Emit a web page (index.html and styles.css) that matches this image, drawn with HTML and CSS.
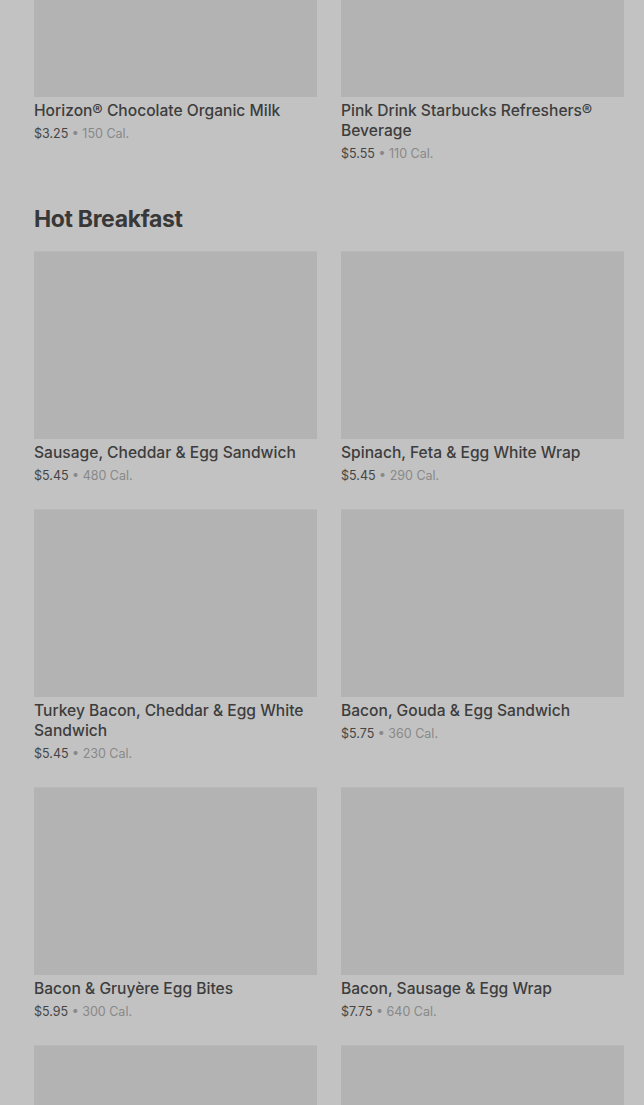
FILE: index.html
```html
<!DOCTYPE html>
<html lang="en">

<head>
    <meta charset="UTF-8">
    <meta name="viewport" content="width=device-width, initial-scale=1.0">
    <title>Menu - Hot Breakfast</title>
    <link rel="stylesheet" href="styles.css">
</head>

<body>
    <div class="page">
        <section class="menu-section first">
            <div class="item-grid">
                <div class="item-card">
                    <div class="item-image"></div>
                    <h3 class="item-title">Horizon® Chocolate Organic Milk</h3>
                    <p class="item-meta"><span class="price">$3.25</span> • 150 Cal.</p>
                </div>
                <div class="item-card">
                    <div class="item-image"></div>
                    <h3 class="item-title">Pink Drink Starbucks Refreshers® Beverage</h3>
                    <p class="item-meta"><span class="price">$5.55</span> • 110 Cal.</p>
                </div>
            </div>
        </section>

        <section class="menu-section">
            <h2 class="section-title">Hot Breakfast</h2>
            <div class="item-grid">
                <div class="item-card">
                    <div class="item-image"></div>
                    <h3 class="item-title">Sausage, Cheddar &amp; Egg Sandwich</h3>
                    <p class="item-meta"><span class="price">$5.45</span> • 480 Cal.</p>
                </div>
                <div class="item-card">
                    <div class="item-image"></div>
                    <h3 class="item-title">Spinach, Feta &amp; Egg White Wrap</h3>
                    <p class="item-meta"><span class="price">$5.45</span> • 290 Cal.</p>
                </div>
                <div class="item-card">
                    <div class="item-image"></div>
                    <h3 class="item-title">Turkey Bacon, Cheddar &amp; Egg White Sandwich</h3>
                    <p class="item-meta"><span class="price">$5.45</span> • 230 Cal.</p>
                </div>
                <div class="item-card">
                    <div class="item-image"></div>
                    <h3 class="item-title">Bacon, Gouda &amp; Egg Sandwich</h3>
                    <p class="item-meta"><span class="price">$5.75</span> • 360 Cal.</p>
                </div>
                <div class="item-card">
                    <div class="item-image"></div>
                    <h3 class="item-title">Bacon &amp; Gruyère Egg Bites</h3>
                    <p class="item-meta"><span class="price">$5.95</span> • 300 Cal.</p>
                </div>
                <div class="item-card">
                    <div class="item-image"></div>
                    <h3 class="item-title">Bacon, Sausage &amp; Egg Wrap</h3>
                    <p class="item-meta"><span class="price">$7.75</span> • 640 Cal.</p>
                </div>
                <div class="item-card">
                    <div class="item-image"></div>
                    <h3 class="item-title">Double-Smoked Bacon, Cheddar &amp; Egg Sandwich</h3>
                    <p class="item-meta"><span class="price">$6.25</span> • 500 Cal.</p>
                </div>
                <div class="item-card">
                    <div class="item-image"></div>
                    <h3 class="item-title">Impossible™ Breakfast Sandwich</h3>
                    <p class="item-meta"><span class="price">$6.45</span> • 420 Cal.</p>
                </div>
            </div>
        </section>
    </div>
</body>

</html>
```

FILE: styles.css
```css
html,
body {
    margin: 0;
    padding: 0;
    background-color: #c2c2c2;
    overflow: hidden;
}

body {
    font-family: Inter, "Noto Sans", Arial, sans-serif;
    color: #3b3b3b;
}

/* the page is scrolled a little, the first row of cards is cut at the top */
.page {
    margin-top: -91px;
    padding: 0 20px 0 34px;
}

.menu-section {
    margin-bottom: 40px;
}

.section-title {
    margin: 0 0 16px;
    font-size: 23px;
    line-height: 32px;
    font-weight: 700;
    letter-spacing: -0.35px;
    color: #383838;
}

.item-grid {
    display: grid;
    grid-template-columns: 1fr 1fr;
    column-gap: 24px;
    row-gap: 24px;
}

.item-image {
    height: 188px;
    background-color: #b3b3b3;
    border-top: 1px solid #b9b9b9;
    box-sizing: border-box;
}

.item-title {
    margin: 4px 0 0;
    font-size: 15.6px;
    line-height: 20px;
    font-weight: 500;
    color: #3d3d3d;
}

.item-meta {
    margin: 3px 0 0;
    font-size: 12.5px;
    line-height: 19px;
    color: #888888;
}

.item-meta .price {
    color: #454545;
}
```
